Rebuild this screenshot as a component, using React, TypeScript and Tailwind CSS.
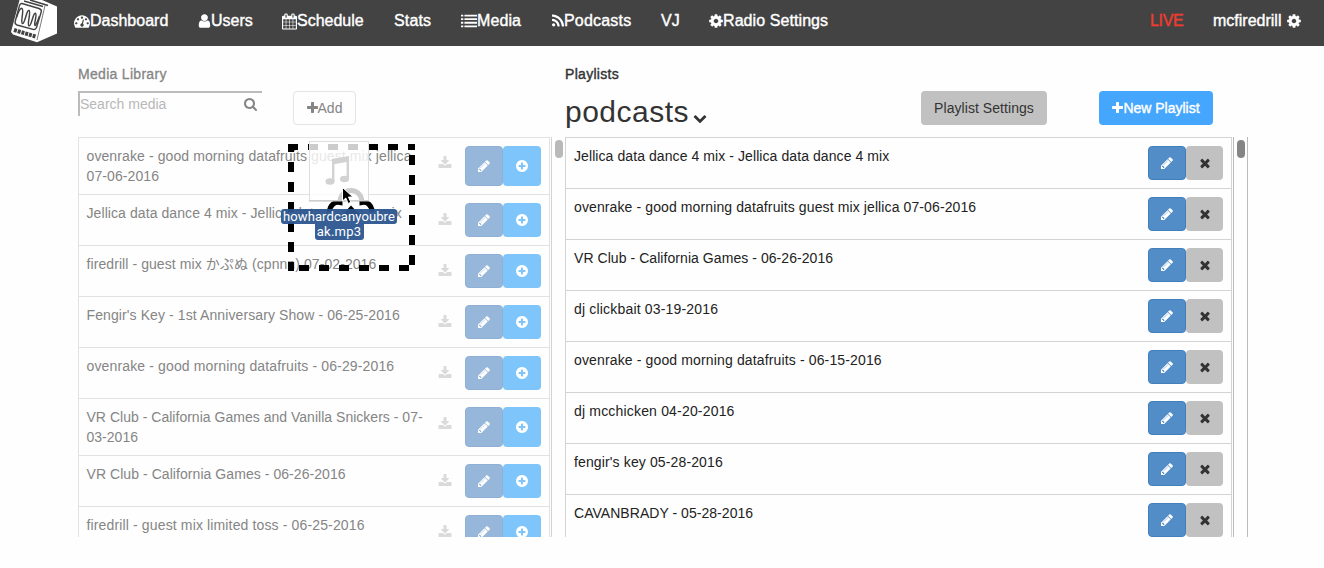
import React from "react";

const P = {
  dash: "M384 1152q0-53-37.5-90.5t-90.5-37.5-90.5 37.5-37.5 90.5 37.5 90.5 90.5 37.5 90.5-37.5 37.5-90.5zm192-448q0-53-37.5-90.5t-90.5-37.5-90.5 37.5-37.5 90.5 37.5 90.5 90.5 37.5 90.5-37.5 37.5-90.5zm428 481l101-382q6-26-7.5-48.5t-38.5-29.5-48 6.5-30 39.5l-101 382q-60 5-107 43.5t-63 98.5q-20 77 20 146t117 89 146-20 89-117q16-60-6-117t-72-91zm660-33q0-53-37.5-90.5t-90.5-37.5-90.5 37.5-37.5 90.5 37.5 90.5 90.5 37.5 90.5-37.5 37.5-90.5zm-640-640q0-53-37.5-90.5t-90.5-37.5-90.5 37.5-37.5 90.5 37.5 90.5 90.5 37.5 90.5-37.5 37.5-90.5zm448 192q0-53-37.5-90.5t-90.5-37.5-90.5 37.5-37.5 90.5 37.5 90.5 90.5 37.5 90.5-37.5 37.5-90.5zm320 448q0 261-141 483-19 29-54 29h-1402q-35 0-54-29-141-221-141-483 0-182 71-348t191-286 286-191 348-71 348 71 286 191 191 286 71 348z",
  user: "M1536 1399q0 109-62.5 187t-150.5 78h-854q-88 0-150.5-78t-62.5-187q0-85 8.5-160.5t31.5-152 58.5-131 94-89 134.5-34.5q131 128 313 128t313-128q76 0 134.5 34.5t94 89 58.5 131 31.5 152 8.5 160.5zm-256-887q0 159-112.5 271.5t-271.5 112.5-271.5-112.5-112.5-271.5 112.5-271.5 271.5-112.5 271.5 112.5 112.5 271.5z",
  cog: "M1152 896q0-106-75-181t-181-75-181 75-75 181 75 181 181 75 181-75 75-181zm512-109v222q0 12-8 23t-20 13l-185 28q-19 54-39 91 35 50 107 138 10 12 10 25t-9 23q-27 37-99 108t-94 71q-12 0-26-9l-138-108q-44 23-91 38-16 136-29 186-7 28-36 28h-222q-14 0-24.5-8.5t-11.5-21.5l-28-184q-49-16-90-37l-141 107q-10 9-25 9-14 0-25-11-126-114-165-168-7-10-7-23 0-12 8-23 15-21 51-66.5t54-70.5q-27-50-41-99l-183-27q-13-2-21-12.5t-8-23.5v-222q0-12 8-23t19-13l186-28q14-46 39-92-40-57-107-138-10-12-10-24 0-10 9-23 26-36 98.5-107.5t94.5-71.5q13 0 26 10l138 107q44-23 91-38 16-136 29-186 7-28 36-28h222q14 0 24.5 8.5t11.5 21.5l28 184q49 16 90 37l142-107q9-9 24-9 13 0 25 10 129 119 165 170 7 8 7 22 0 12-8 23-15 21-51 66.5t-54 70.5q26 50 41 98l183 28q13 2 21 12.5t8 23.5z",
  pencil: "M491 1536l91-91-235-235-91 91v107h128v128h107zm523-928q0-22-22-22-10 0-17 7l-542 542q-7 7-7 17 0 22 22 22 10 0 17-7l542-542q7-7 7-17zm-54-192l416 416-832 832h-416v-416zm683 96q0 53-37 90l-166 166-416-416 166-165q36-38 90-38 53 0 91 38l235 234q37 39 37 91z",
  search: "M1216 832q0-185-131.5-316.5t-316.5-131.5-316.5 131.5-131.5 316.5 131.5 316.5 316.5 131.5 316.5-131.5 131.5-316.5zm512 832q0 52-38 90t-90 38q-54 0-90-38l-343-342q-179 124-399 124-143 0-273.5-55.5t-225-150-150-225-55.5-273.5 55.5-273.5 150-225 225-150 273.5-55.5 273.5 55.5 225 150 150 225 55.5 273.5q0 220-124 399l343 343q37 37 37 90z",
  plus: "M1600 736v192q0 40-28 68t-68 28h-416v416q0 40-28 68t-68 28h-192q-40 0-68-28t-28-68v-416h-416q-40 0-68-28t-28-68v-192q0-40 28-68t68-28h416v-416q0-40 28-68t68-28h192q40 0 68 28t28 68v416h416q40 0 68 28t28 68z",
  times: "M1490 1322q0 40-28 68l-136 136q-28 28-68 28t-68-28l-294-294-294 294q-28 28-68 28t-68-28l-136-136q-28-28-28-68t28-68l294-294-294-294q-28-28-28-68t28-68l136-136q28-28 68-28t68 28l294 294 294-294q28-28 68-28t68 28l136 136q28 28 28 68t-28 68l-294 294 294 294q28 28 28 68z",
  rss: "M576 1344q0 80-56 136t-136 56-136-56-56-136 56-136 136-56 136 56 56 136zm512 123q2 28-17 48-18 21-47 21h-135q-25 0-43-16.5t-20-41.5q-22-229-184.5-391.5t-391.5-184.5q-25-2-41.5-20t-16.5-43v-135q0-29 21-47 17-17 43-17h5q160 13 306 80.5t259 181.5q114 113 181.5 259t80.5 306zm512 2q2 27-18 47-18 20-46 20h-143q-26 0-44.5-17.5t-19.5-42.5q-12-215-101-408.5t-231.5-336-336-231.5-408.5-102q-25-1-42.5-19.5t-17.5-43.5v-143q0-28 20-46 18-18 44-18h3q262 13 501.5 120t425.5 294q187 186 294 425.5t120 501.5z",
  chevron: "M1683 808l-742 741q-19 19-45 19t-45-19l-742-741q-19-19-19-45.5t19-45.5l166-165q19-19 45-19t45 19l531 531 531-531q19-19 45-19t45 19l166 165q19 19 19 45.5t-19 45.5z",
  plusCircle: "M1344 960v-128q0-26-19-45t-45-19h-256v-256q0-26-19-45t-45-19h-128q-26 0-45 19t-19 45v256h-256q-26 0-45 19t-19 45v128q0 26 19 45t45 19h256v256q0 26 19 45t45 19h128q26 0 45-19t19-45v-256h256q26 0 45-19t19-45zm320-64q0 209-103 385.5t-279.5 279.5-385.5 103-385.5-103-279.5-279.5-103-385.5 103-385.5 279.5-279.5 385.5-103 385.5 103 279.5 279.5 103 385.5z",
  download: "M1728 1120v320q0 40-28 68t-68 28h-1472q-40 0-68-28t-28-68v-320q0-40 28-68t68-28h465l135 136q58 56 136 56t136-56l136-136h464q40 0 68 28t28 68zm-325-569q17 41-14 70l-448 448q-18 19-45 19t-45-19l-448-448q-31-29-14-70 17-39 59-39h256v-448q0-26 19-45t45-19h256q26 0 45 19t19 45v448h256q42 0 59 39z",
  list: "M0 192h256v200H0zM384 192h1408v200H384zM0 592h256v200H0zM384 592h1408v200H384zM0 992h256v200H0zM384 992h1408v200H384zM0 1392h256v200H0zM384 1392h1408v200H384z",
  calendar: "M192 1664h288v-288h-288v288zm352 0h320v-288h-320v288zm-352-352h288v-320h-288v320zm352 0h320v-320h-320v320zm-352-384h288v-288h-288v288zm736 736h320v-288h-320v288zm-384-736h320v-288h-320v288zm768 736h288v-288h-288v288zm-384-352h320v-320h-320v320zm-352-864v-288q0-13-9.5-22.5t-22.5-9.5h-64q-13 0-22.5 9.5t-9.5 22.5v288q0 13 9.5 22.5t22.5 9.5h64q13 0 22.5-9.5t9.5-22.5zm736 864h288v-320h-288v320zm-384-384h320v-288h-320v288zm384 0h288v-288h-288v288zm32-480v-288q0-13-9.5-22.5t-22.5-9.5h-64q-13 0-22.5 9.5t-9.5 22.5v288q0 13 9.5 22.5t22.5 9.5h64q13 0 22.5-9.5t9.5-22.5zm384-64v1280q0 52-38 90t-90 38h-1408q-52 0-90-38t-38-90v-1280q0-52 38-90t90-38h128v-96q0-66 47-113t113-47h64q66 0 113 47t47 113v96h384v-96q0-66 47-113t113-47h64q66 0 113 47t47 113v96h128q52 0 90 38t38 90z",
};

function Icon({ d, className, box = "0 0 1792 1792" }: { d: string; className: string; box?: string }) {
  return (
    <svg viewBox={box} className={`shrink-0 ${className}`} fill="currentColor" aria-hidden="true">
      <path d={d} />
    </svg>
  );
}

function Logo() {
  return (
    <svg viewBox="0 0 46 43" className="h-[43px] w-[46px] shrink-0" aria-hidden="true">
      <path d="M8.500 0H31L46 6.500V33.500L26 42.300L2 34.500L0 32Z" fill="#fff" />
      <path d="M13 1L32 6.500M19 0L37 5.500" fill="none" stroke="#434343" strokeWidth="1.600" />
      <path d="M34 5.500L26 40" fill="none" stroke="#434343" strokeWidth="0.700" />
      <path d="M11 3.500L28 8.500Q31 9.500 30.200 12L25.500 27.500Q24.500 30 22 29.300L6 25Q3.500 24 4.200 21.500L8.500 5.500Q9.300 3 11 3.500Z" fill="none" stroke="#434343" strokeWidth="1.400" />
      <path d="M5.500 17.500C7.500 11 9.500 7.500 11 8.500C13.500 10 9 22.500 11.500 23.500C14 24 15.500 9.500 18 10.500C20.500 11.500 15.500 25 18 25.800C20.500 26.500 22 12.500 24.500 13.300C26.500 14.500 22.500 24 24 25.500C25.500 25 27 20 28.500 16" fill="none" stroke="#434343" strokeWidth="1.500" />
      <path d="M3 30L24.500 36.500" stroke="#434343" strokeWidth="4" strokeDasharray="3 0.900" />
    </svg>
  );
}

type Row = { lines: string[]; tracking: string };

const media: Row[] = [
  { lines: ["ovenrake - good morning datafruits guest mix jellica", "07-06-2016"], tracking: "tracking-[0.1px]" },
  { lines: ["Jellica data dance 4 mix - Jellica data dance 4 mix"], tracking: "tracking-[0.08px]" },
  { lines: ["firedrill - guest mix かぷぬ (cpnnn) 07-02-2016"], tracking: "tracking-[0.08px]" },
  { lines: ["Fengir's Key - 1st Anniversary Show - 06-25-2016"], tracking: "tracking-[0.1px]" },
  { lines: ["ovenrake - good morning datafruits - 06-29-2016"], tracking: "tracking-[0.14px]" },
  { lines: ["VR Club - California Games and Vanilla Snickers - 07-", "03-2016"], tracking: "tracking-[0.02px]" },
  { lines: ["VR Club - California Games - 06-26-2016"], tracking: "tracking-[0.06px]" },
  { lines: ["firedrill - guest mix limited toss - 06-25-2016"], tracking: "tracking-[0.14px]" },
];

const playlist = [
  { text: "Jellica data dance 4 mix - Jellica data dance 4 mix", tracking: "tracking-[0.08px]" },
  { text: "ovenrake - good morning datafruits guest mix jellica 07-06-2016", tracking: "tracking-[0.11px]" },
  { text: "VR Club - California Games - 06-26-2016", tracking: "tracking-[0.06px]" },
  { text: "dj clickbait 03-19-2016", tracking: "tracking-[0.18px]" },
  { text: "ovenrake - good morning datafruits - 06-15-2016", tracking: "tracking-[0.14px]" },
  { text: "dj mcchicken 04-20-2016", tracking: "tracking-[0.18px]" },
  { text: "fengir's key 05-28-2016", tracking: "tracking-[0.13px]" },
  { text: "CAVANBRADY - 05-28-2016", tracking: "tracking-[0.04px]" },
];

function NavItem({ label, icon, iconClass = "", box, className }: { label: string; icon?: string; iconClass?: string; box?: string; className: string }) {
  return (
    <a className={`flex items-center whitespace-nowrap ${className}`}>
      {icon && <Icon d={icon} className={iconClass} box={box} />}
      <span>{label}</span>
    </a>
  );
}

function DropOverlay() {
  return (
    <div className="absolute left-[280px] top-[138px] h-[140px] w-[140px]">
      <svg viewBox="280 138 140 140" className="h-full w-full" aria-hidden="true">
        <g stroke="#000" strokeWidth="6" fill="none" strokeDasharray="10 10">
          <path d="M288 147H415" />
          <path d="M412 144V271" strokeDashoffset="9" />
          <path d="M288 268H415" strokeDashoffset="9" />
          <path d="M291 144V271" strokeDashoffset="2" />
        </g>
        <path d="M329.500 212C329.500 205 335 201.500 340 202.500C340 194 346 190.500 351 190.500S362 194 362 202.500C367 201.500 372 205 372 212" fill="none" stroke="#000" strokeWidth="5" />
        <path d="M351 205.500L361 216H341Z" />
        <rect x="309.500" y="141.500" width="59" height="59" fill="#fff" fillOpacity="0.8" stroke="#dedede" />
        <path d="M309 201H369" stroke="#bdbdbd" />
        <path d="M333.200 182V160L347.800 157.500V179" fill="none" stroke="#d2d2d2" strokeWidth="2.400" />
        <path d="M332 162L349 159" stroke="#d2d2d2" strokeWidth="5" />
        <ellipse cx="330" cy="181.500" rx="4.500" ry="3.300" fill="#d2d2d2" />
        <ellipse cx="344.500" cy="179" rx="4.500" ry="3.300" fill="#d2d2d2" />
        <path d="M342.500 187.500V201L345.800 198L348.200 203.500L350.800 202.300L348.500 197H353Z" fill="#000" stroke="#fff" />
      </svg>
      <div className="absolute left-[1px] top-[71px] flex w-[116px] flex-col items-center whitespace-nowrap font-['Roboto',sans-serif] text-[13px] leading-[15px] text-white">
        <span className="h-[15px] w-[116px] rounded-[3px] bg-[#2c5690]/95 text-center tracking-[0.1px]">howhardcanyoubre</span>
        <span className="h-[16px] w-[49px] rounded-b-[3px] bg-[#2c5690]/95 text-center tracking-[0.2px]">ak.mp3</span>
      </div>
    </div>
  );
}

export default function App() {
  return (
    <div className="relative h-[568px] w-[1324px] overflow-hidden bg-[#fefefe] font-['Liberation_Sans','Noto_Sans_CJK_JP',sans-serif] text-sm leading-5 text-[#333]">
      <header className="flex h-[46px] items-start bg-[#434343] pl-[11px] text-base text-white [-webkit-text-stroke:0.4px]">
        <Logo />
        <nav className="flex h-[42px] grow items-center">
          <NavItem label="Dashboard" icon={P.dash} iconClass="h-4 w-4" className="ml-[17px] w-[124px]" />
          <NavItem label="Users" icon={P.user} iconClass="h-4 w-[13px]" box="200 0 1400 1792" className="w-[84px]" />
          <NavItem label="Schedule" icon={P.calendar} iconClass="h-[17px] w-[15px]" box="64 0 1664 1792" className="w-[112px]" />
          <NavItem label="Stats" className="w-[67px] tracking-[0.15px]" />
          <NavItem label="Media" icon={P.list} iconClass="h-4 w-4" className="w-[91px] tracking-[0.1px]" />
          <NavItem label="Podcasts" icon={P.rss} iconClass="h-4 w-[12px]" box="192 0 1408 1792" className="w-[109px] tracking-[0.2px]" />
          <NavItem label="VJ" className="w-[48px]" />
          <NavItem label="Radio Settings" icon={P.cog} iconClass="h-4 w-[14px]" box="128 0 1536 1792" className="grow tracking-[0.08px]" />
          <NavItem label="LIVE" className="w-[63px] tracking-[-0.3px] text-[#f03c2e]" />
          <a className="flex w-[111px] items-center gap-[6px]">
            <span>mcfiredrill</span>
            <Icon d={P.cog} className="h-4 w-[14px]" box="128 0 1536 1792" />
          </a>
        </nav>
      </header>

      <main className="flex pl-[78px]">
        <section className="w-[487px]">
          <div className="h-[91px] pt-[18px] text-[#858585]">
            <h2 className="tracking-[0.3px] [-webkit-text-stroke:0.3px]">Media Library</h2>
            <div className="mt-[7px] flex">
              <div className="flex h-[25px] w-[184px] justify-between border-l-2 border-t-2 border-[#bbb] pr-[5px] pt-[1px]">
                <span className="text-[#b8b8b8]">Search media</span>
                <Icon d={P.search} className="mt-[4px] h-[13px] w-[13px]" box="64 128 1664 1664" />
              </div>
              <button className="ml-[31px] flex h-[34px] w-[63px] items-center justify-center rounded border border-[#e5e5e5]">
                <Icon d={P.plus} className="h-[14px] w-[11px]" box="192 0 1408 1792" />
                Add
              </button>
            </div>
          </div>
          <div className="flex h-[400px] w-[488px] overflow-hidden">
            <div className="w-[474px] shrink-0 border-r border-[#d2d2d2] pr-[1px]">
              {media.map(({ lines, tracking }) => (
                <div key={lines[0]} className="flex border-l border-r border-t border-[#e2e2e2] pb-2 pl-[7.5px] pr-2 pt-2 text-[#858585]">
                  <div className={`grow whitespace-nowrap ${tracking}`}>
                    {lines.map((l) => (
                      <div key={l}>{l}</div>
                    ))}
                  </div>
                  <Icon d={P.download} className="mr-[13px] mt-[10px] h-[12px] w-[14px] text-[#dadada]" box="64 0 1664 1536" />
                  <div className={lines.length > 1 ? "flex h-10" : "flex h-[34px]"}>
                    <button className="flex w-[38px] items-center justify-center rounded border border-[#8fb0d5] bg-[#97b7da] text-white">
                      <Icon d={P.pencil} className="h-[14px] w-[14px]" />
                    </button>
                    <button className="flex w-[38px] items-center justify-center rounded bg-[#7dc5fa] text-white">
                      <Icon d={P.plusCircle} className="h-[14px] w-[14px]" />
                    </button>
                  </div>
                </div>
              ))}
            </div>
            <div className="pl-[3px] pt-[3px]">
              <div className="h-[18px] w-2 rounded-full bg-[#b9b9b9]" />
            </div>
          </div>
        </section>

        <section className="w-[683px]">
          <div className="h-[91px] pt-[18px]">
            <h2 className="tracking-[0.3px] [-webkit-text-stroke:0.4px]">Playlists</h2>
            <div className="mt-[7px] flex">
              <h1 className="flex w-[356px] text-[30px] leading-[42px] tracking-[0.5px] text-[#333]">
                podcasts
                <Icon d={P.chevron} className="ml-1 mt-[20px] h-[14px] w-[14px]" />
              </h1>
              <button className="h-[34px] w-[126px] rounded bg-[#c1c1c1] tracking-[0.06px]">Playlist Settings</button>
              <button className="ml-[52px] flex h-[34px] w-[114px] items-center justify-center rounded bg-[#44a6fc] text-white [-webkit-text-stroke:0.4px]">
                <Icon d={P.plus} className="h-[14px] w-[11px]" box="192 0 1408 1792" />
                New Playlist
              </button>
            </div>
          </div>
          <div className="flex h-[400px] overflow-hidden">
            <div className="w-[669px] shrink-0 border-r border-[#bbb] pr-[1px]">
              {playlist.map(({ text, tracking }) => (
                <div key={text} className="flex border-l border-r border-t border-[#d4d4d4] pb-2 pl-2 pr-2 pt-2 text-[#222]">
                  <div className={`grow whitespace-nowrap ${tracking}`}>{text}</div>
                  <div className="flex h-[34px]">
                    <button className="flex w-[38px] items-center justify-center rounded border border-[#4280bd] bg-[#528dc7] text-white">
                      <Icon d={P.pencil} className="h-[14px] w-[14px]" />
                    </button>
                    <button className="flex w-[37px] items-center justify-center rounded bg-[#c1c1c1] text-[#333]">
                      <Icon d={P.times} className="h-[14px] w-[14px]" />
                    </button>
                  </div>
                </div>
              ))}
            </div>
            <div className="w-[14px] border-r border-[#bbb] pl-[3px] pt-[3px]">
              <div className="h-[18px] w-2 rounded-full bg-[#858585]" />
            </div>
          </div>
        </section>
      </main>
      <DropOverlay />
    </div>
  );
}
